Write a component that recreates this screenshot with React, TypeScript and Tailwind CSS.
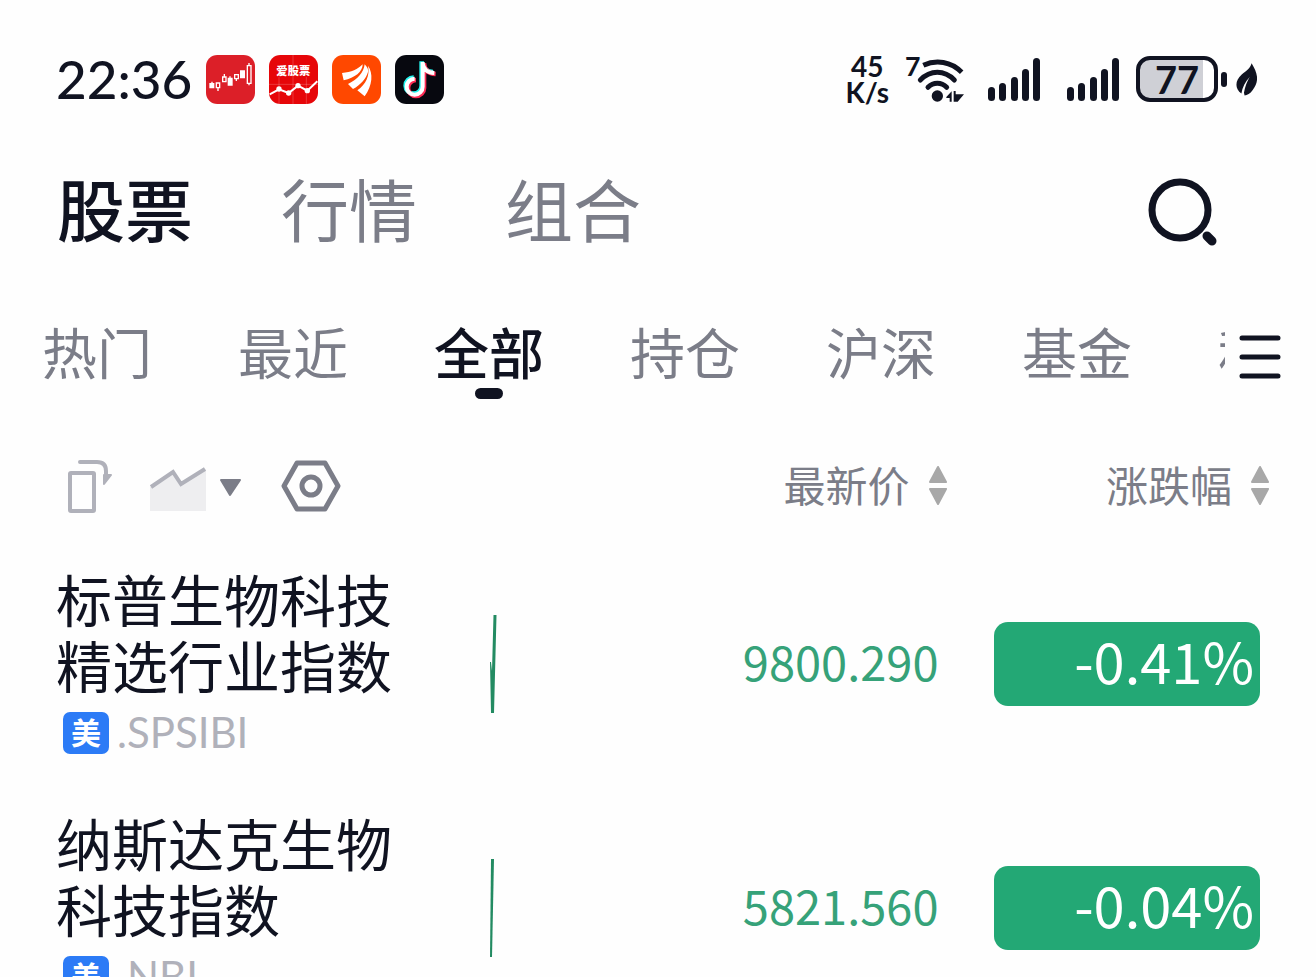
import React, { useState } from 'react';
import clsx from 'clsx';

const mainTabs = ['股票', '行情', '组合'];
const groups = ['热门', '最近', '全部', '持仓', '沪深', '基金', '科创'];

interface Quote {
  name: string;
  market: string;
  code: string;
  price: string;
  change: string;
  trend: string;
}

const quotes: Quote[] = [
  {
    name: '标普生物科技精选行业指数',
    market: '美',
    code: '.SPSIBI',
    price: '9800.290',
    change: '-0.41%',
    trend: 'M4.5 0H7.5L5 98H2L1 47H2L3 56Z',
  },
  {
    name: '纳斯达克生物科技指数',
    market: '美',
    code: '.NBI',
    price: '5821.560',
    change: '-0.04%',
    trend: 'M2 0H5L3 98H1Z',
  },
];

const AppIcons: React.FC = () => (
  <div className="flex gap-[14px]">
    <svg viewBox="0 0 147 147" className="size-[49px]">
      <rect width="147" height="147" rx="34" fill="#dc1f28" />
      <g fill="#fff" stroke="#fff" strokeWidth="4">
        <path d="M12 86h11v12H12ZM18 80v6M67 70h11v20H67ZM72 64v6M104 48h11v20h-11Z" />
        <path d="M31 84h10v14H31ZM36 98v10M50 66h10v14H50ZM55 57v9M86 59h11v12H86ZM91 71v7M124 32h11v53h-11ZM129 24v8M129 85v6" fill="none" />
      </g>
    </svg>
    <svg viewBox="0 0 147 147" className="size-[49px]">
      <rect width="147" height="147" rx="34" fill="#e60609" />
      <path d="M72 0V147M30 66V147M112 66V147M0 88H147" stroke="#fff" strokeOpacity=".3" strokeWidth="2" />
      <text x="73" y="61" textAnchor="middle" fontSize="34" fontWeight="900" fill="#fff">爱股票</text>
      <path d="M2 118 30 103 59 114 87 92 115 107 145 79" fill="none" stroke="#fff" strokeWidth="6" />
      <g fill="#fff">
        <circle cx="30" cy="102" r="8" />
        <circle cx="59" cy="114" r="8" />
        <circle cx="87" cy="92" r="8" />
        <circle cx="115" cy="107" r="8" />
      </g>
    </svg>
    <svg viewBox="0 0 147 147" className="size-[49px]">
      <rect width="147" height="147" rx="34" fill="#ff4800" />
      <g fill="#fff">
        <path d="M30 54C58 52 78 43 92 28C92 50 69 69 35 76Z" />
        <path d="M48 87C78 73 95 52 98 28C107 38 109 43 108 51C102 71 86 90 63 102Z" />
        <path d="M76 106C102 87 114 62 108 32C124 55 122 90 98 124Z" />
      </g>
    </svg>
    <svg viewBox="0 0 147 147" className="size-[49px]">
      <rect width="147" height="147" rx="34" fill="#07080f" />
      <g fill="none" strokeWidth="14">
        <path d="M80 19V92A24 24 0 1 1 56 68M80 22C82 41 94 50 114 51" stroke="#25f4ee" />
        <path d="M87 24V99A24 24 0 1 1 63 75M87 27C89 46 100 56 122 57" stroke="#fe2c55" />
        <path d="M83 21V95A24 24 0 1 1 59 71M83 24C85 43 97 53 118 54" stroke="#fff" strokeWidth="12" />
      </g>
    </svg>
  </div>
);

const WifiIcon: React.FC = () => (
  <svg viewBox="0 0 180 144" className="h-12 w-[60px] overflow-visible" fill="#101321">
    <text x="0" y="64" fontSize="80" fontWeight="700">7</text>
    <g fill="none" stroke="#101321" strokeWidth="15">
      <path d="M55 31C94 13 138 20 170 52" />
      <path d="M46 75C76 44 118 44 148 75" strokeLinecap="round" />
      <path d="M69 97C85 81 109 81 125 97" strokeLinecap="round" />
    </g>
    <circle cx="97" cy="123" r="17" />
    <path d="M124 126 140 109V140H134V129H124ZM146 108H152V118H177L158 140H146Z" />
  </svg>
);

const SignalIcon: React.FC = () => (
  <svg viewBox="0 0 54 44" className="h-11 w-[54px]" fill="#101321">
    <rect x="1" y="30" width="7" height="14" rx="3.5" />
    <rect x="12" y="26" width="7" height="18" rx="3.5" />
    <rect x="24" y="20" width="7" height="24" rx="3.5" />
    <rect x="35" y="12" width="7" height="32" rx="3.5" />
    <rect x="46" y="1" width="7" height="43" rx="3.5" />
  </svg>
);

const StatusBar: React.FC = () => (
  <div className="flex h-[78px] items-center justify-between pr-[59px] pl-[56px] font-['Lato','Noto_Sans_CJK_SC',sans-serif]">
    <div className="flex items-center gap-[14px]">
      <span className="text-[53px] leading-[76px] font-medium">22:36</span>
      <AppIcons />
    </div>
    <div className="flex items-center">
      <div className="text-center text-[28px] leading-[26px] font-bold">
        <p>45</p>
        <p>K/s</p>
      </div>
      <div className="ml-4"><WifiIcon /></div>
      <div className="ml-[22px] flex gap-[25px]">
        <SignalIcon />
        <SignalIcon />
      </div>
      <div className="ml-4 flex items-center gap-[3px]">
        <div className="flex h-[46px] w-[82px] rounded-[14px] border-4 border-[#101321] bg-linear-to-r from-[#cfd0d6] from-85% to-white to-85%">
          <span className="w-full text-center text-[38px] leading-[38px] font-bold">77</span>
        </div>
        <div className="h-[15px] w-[6px] rounded-full bg-[#101321]" />
      </div>
      <svg viewBox="0 0 66 104" className="ml-[9px] h-[35px] w-[21px]" fill="#101321">
        <path d="M49 1C66 30 76 54 52 86C45 96 35 102 27 102L25 94C28 75 35 58 43 44C29 59 20 76 17 96C-4 82-4 55 18 36C34 24 45 17 49 1Z" />
      </svg>
    </div>
  </div>
);

const SortArrows: React.FC = () => (
  <svg viewBox="0 0 20 40" className="h-10 w-5" fill="#a8a8a8" stroke="#a8a8a8" strokeLinejoin="round">
    <path d="M10 2 18 17H2ZM10 39 18 24H2Z" strokeWidth="2" />
  </svg>
);

const App: React.FC = () => {
  const [tab, setTab] = useState('股票');
  const [group, setGroup] = useState('全部');

  return (
    <div className="h-screen overflow-hidden bg-[#fefefe] pt-10 font-['Noto_Sans_CJK_SC',sans-serif] text-[#101321]">
      <StatusBar />

      {/* Main tabs */}
      <header className="flex h-[180px] items-center justify-between pr-[98px] pl-[57px]">
        <nav className="flex gap-[88px]">
          {mainTabs.map((name) => (
            <button
              key={name}
              onClick={() => setTab(name)}
              className={clsx('text-[68px] leading-[80px]', tab === name ? 'font-medium' : 'text-[#7b7d88]')}
            >
              {name}
            </button>
          ))}
        </nav>
        <button aria-label="搜索" className="pt-2">
          <svg viewBox="0 0 70 70" className="size-[70px]" fill="none" stroke="#101321" strokeWidth="7">
            <circle cx="32" cy="33" r="28" />
            <path d="M59 59 64 64" strokeWidth="9" strokeLinecap="round" />
          </svg>
        </button>
      </header>

      {/* Watchlist groups */}
      <div className="flex h-[106px] items-center pr-[34px] pl-[42px]">
        <nav className="flex h-full min-w-0 flex-1 items-center gap-[86px] overflow-hidden">
          {groups.map((name) => (
            <button
              key={name}
              onClick={() => setGroup(name)}
              className={clsx(
                'relative h-full shrink-0 pb-[2px] text-[55px] leading-[66px]',
                group === name ? 'font-medium' : 'text-[#7b7d88]',
              )}
            >
              {name}
              {group === name && (
                <span className="absolute bottom-[5px] left-1/2 h-[11px] w-7 -translate-x-1/2 rounded-full bg-[#101321]" />
              )}
            </button>
          ))}
        </nav>
        <button aria-label="分组管理" className="ml-[13px] pt-3">
          <svg viewBox="0 0 44 44" className="size-11" stroke="#101321" strokeWidth="5" strokeLinecap="round">
            <path d="M4 3H40M4 22H40M4 41H40" />
          </svg>
        </button>
      </div>

      <table className="w-full table-fixed border-collapse">
        <colgroup>
          <col className="w-[36%]" />
          <col />
          <col className="w-[28%]" />
          <col className="w-[28%]" />
        </colgroup>
        <thead>
          <tr className="h-[161px] text-[42px] leading-[54px] text-[#7b7d88]">
            <th className="p-0 pt-[2px] pl-[67px] text-left">
              <div className="flex items-center">
                <button aria-label="横屏">
                  <svg viewBox="0 0 46 54" className="h-[54px] w-[46px]" fill="none" stroke="#b0b1ba" strokeWidth="4">
                    <rect x="3" y="14" width="24" height="38" rx="1" />
                    <path d="M13 3H30Q39 3 39 12V17" strokeLinecap="round" />
                    <path d="M37 16H44L37 25Z" fill="#b0b1ba" strokeWidth="2" strokeLinejoin="round" />
                  </svg>
                </button>
                <button aria-label="走势图" className="ml-9 flex gap-3">
                  <svg viewBox="0 0 58 54" className="h-[54px] w-[58px]">
                    <path d="M1 28 24 13 32 25 57 10V52H1Z" fill="#eeeef0" />
                    <path d="M2 28 24 13 32 25 56 10" fill="none" stroke="#b0b1ba" strokeWidth="4" />
                  </svg>
                  <svg viewBox="0 0 22 54" className="h-[54px] w-[22px]">
                    <path d="M2 21H21L11 36Z" fill="#7b7d88" stroke="#7b7d88" strokeWidth="2" strokeLinejoin="round" />
                  </svg>
                </button>
                <button aria-label="设置" className="ml-10">
                  <svg viewBox="0 0 60 54" className="h-[54px] w-[60px]" fill="none" stroke="#7b7d88" strokeWidth="5">
                    <path d="M16 4H44L57 27 44 50H16L3 27Z" strokeLinejoin="round" />
                    <circle cx="30" cy="27" r="9" />
                  </svg>
                </button>
              </div>
            </th>
            <th />
            <th className="p-0">
              <button className="ml-auto flex items-center gap-[18px] font-normal">
                <span className="pb-[2px]">最新价</span>
                <SortArrows />
              </button>
            </th>
            <th className="p-0 pr-[46px]">
              <button className="ml-auto flex items-center gap-[18px] font-normal">
                <span className="pb-[2px]">涨跌幅</span>
                <SortArrows />
              </button>
            </th>
          </tr>
        </thead>
        <tbody>
          {quotes.map((q) => (
            <tr key={q.code}>
              <td className="p-0 pb-[46px] pl-[56px]">
                <p className="max-w-[340px] text-[56px] leading-[66px]">{q.name}</p>
                <div className="ml-[7px] flex h-[66px] items-center gap-2 pt-[6px]">
                  <span className="h-[42px] w-[46px] rounded-[7px] bg-[#2c7bf6] text-center text-[30px] leading-[38px] font-bold text-white">
                    {q.market}
                  </span>
                  <span className="pb-[2px] font-['Lato',sans-serif] text-[42px] leading-[42px] text-[#b0b1ba]">{q.code}</span>
                </div>
              </td>
              <td className="p-0 pb-[46px] pl-[15px]">
                <svg viewBox="0 0 9 98" className="h-[98px] w-[9px]" fill="#238b62">
                  <path d={q.trend} />
                </svg>
              </td>
              <td className="p-0 pr-[9px] pb-[52px] text-right text-[47px] leading-[66px] text-[#36a279]">{q.price}</td>
              <td className="p-0 pr-[56px] pb-[46px]">
                <div className="ml-auto h-[84px] w-[266px] rounded-[14px] bg-[#23a875] pr-[6px] text-right text-[56px] leading-[76px] text-white">
                  {q.change}
                </div>
              </td>
            </tr>
          ))}
        </tbody>
      </table>
    </div>
  );
};

export default App;
